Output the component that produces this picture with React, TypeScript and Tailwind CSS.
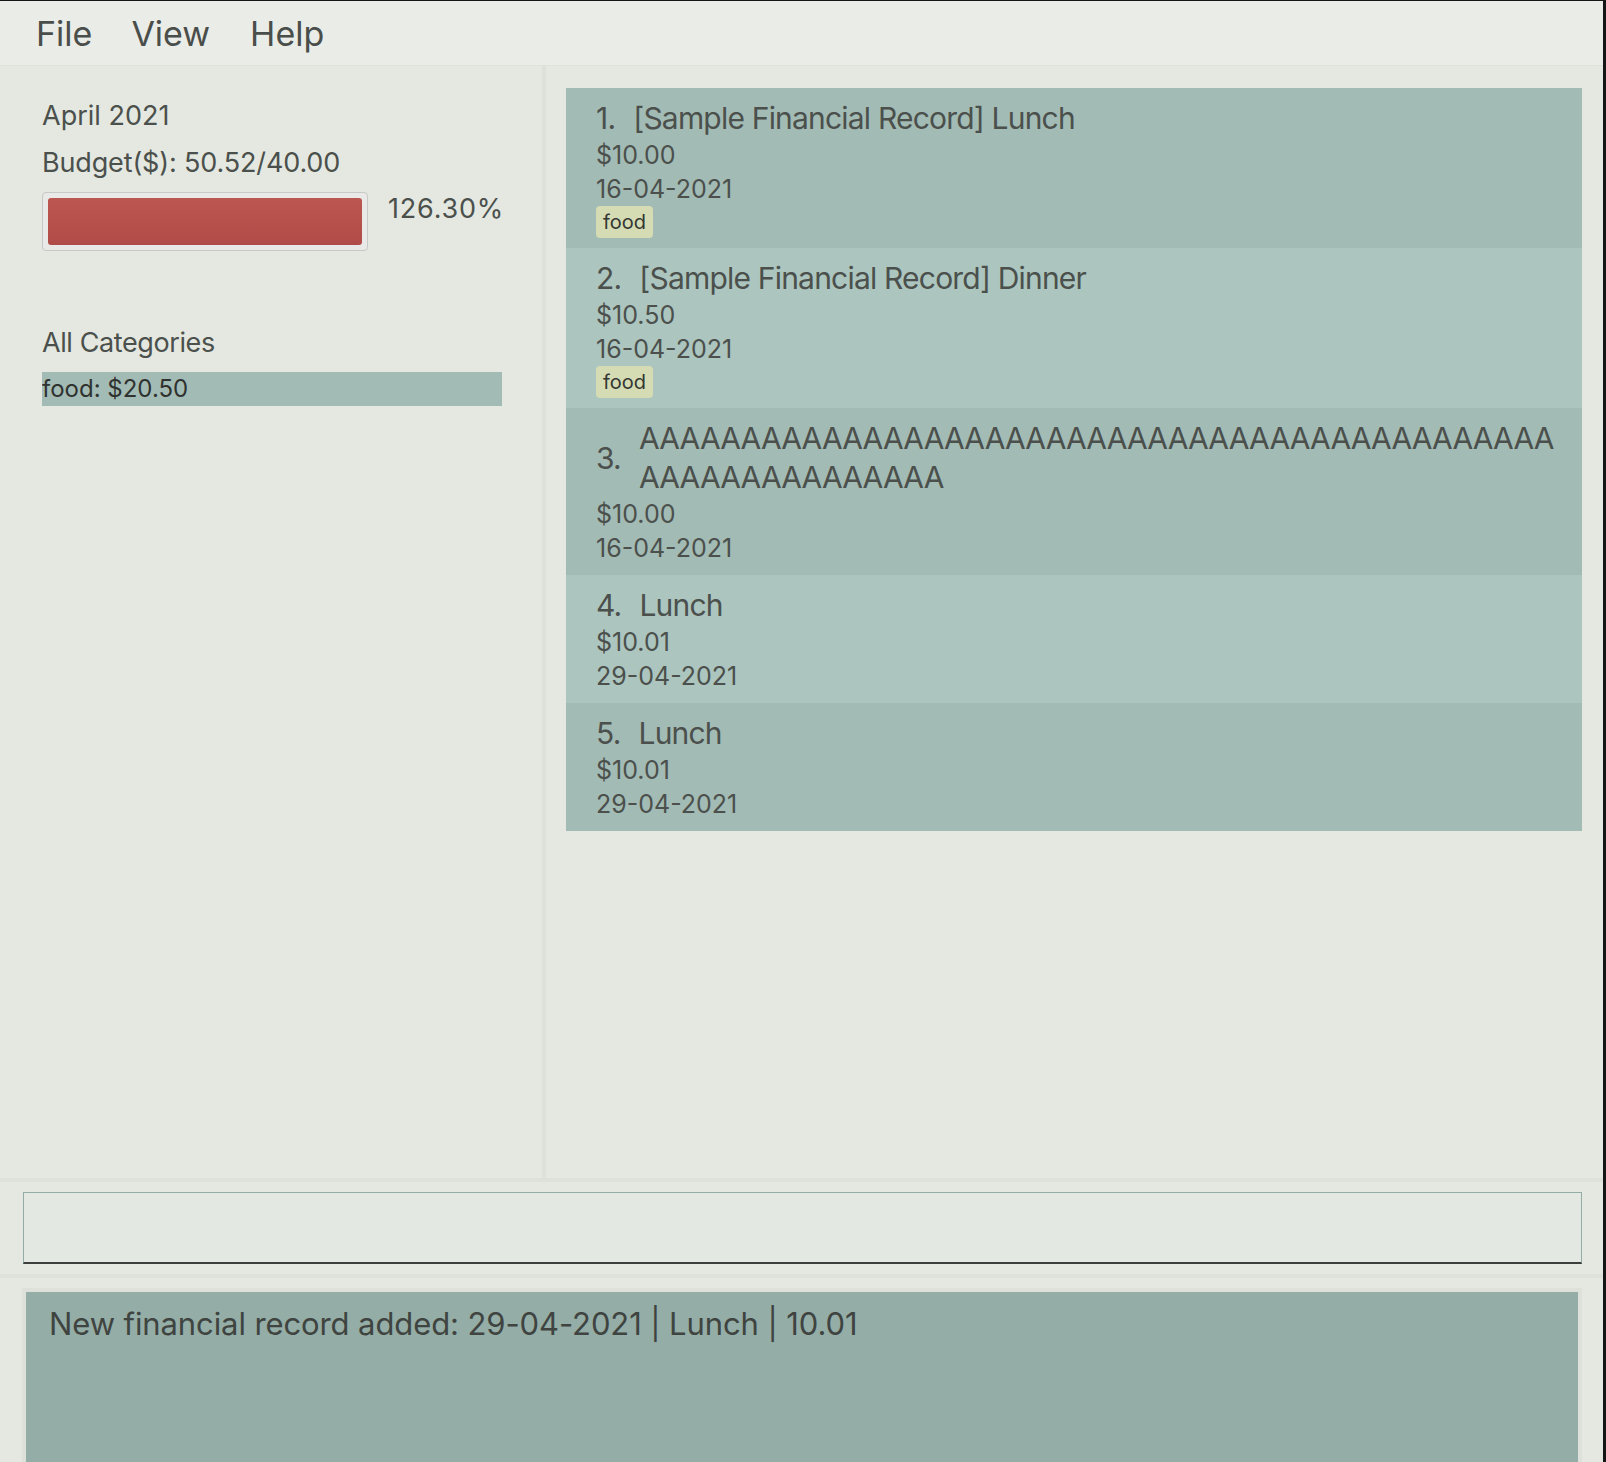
import React from 'react';

type Expense = {
  id: number;
  title: string[];
  amount: string;
  date: string;
  tags: string[];
};

const expenses: Expense[] = [
  { id: 1, title: ['[Sample Financial Record] Lunch'], amount: '$10.00', date: '16-04-2021', tags: ['food'] },
  { id: 2, title: ['[Sample Financial Record] Dinner'], amount: '$10.50', date: '16-04-2021', tags: ['food'] },
  { id: 3, title: ['A'.repeat(45), 'A'.repeat(15)], amount: '$10.00', date: '16-04-2021', tags: [] },
  { id: 4, title: ['Lunch'], amount: '$10.01', date: '29-04-2021', tags: [] },
  { id: 5, title: ['Lunch'], amount: '$10.01', date: '29-04-2021', tags: [] },
];

function ExpenseCard({ item }: { item: Expense }) {
  const odd = item.id % 2 === 1;
  return (
    <div className={`${odd ? 'bg-[#a3bbb5]' : 'bg-[#acc5bf]'} pl-[30px] pt-[11px] pb-[10px]`}>
      <div className="flex items-center gap-[18px] text-[30px] leading-[39px] tracking-[-0.8px]">
        <span>{item.id}.</span>
        <div className="min-w-0">
          {item.title.map((line, i) => (
            <div key={i} className="whitespace-nowrap">{line}</div>
          ))}
        </div>
      </div>
      <div className="text-[25px] leading-[34px]">{item.amount}</div>
      <div className="text-[25px] leading-[34px]">{item.date}</div>
      {item.tags.length > 0 && (
        <div className="flex gap-2">
          {item.tags.map(tag => (
            <span key={tag} className="rounded-[4px] bg-[#d5dcb4] px-[7px] text-[20px] leading-[32px] text-[#333633]">
              {tag}
            </span>
          ))}
        </div>
      )}
    </div>
  );
}

export default function App() {
  return (
    <div
      className="h-[1462px] w-[1606px] overflow-hidden bg-[#161616] pt-[1px] pr-[3px] text-[#4b504c]"
      style={{ fontFamily: 'Inter, "Noto Sans", sans-serif' }}
    >
      <div className="flex h-full flex-col bg-[#e4e8e1]">
        {/* menu bar */}
        <div className="flex h-[65px] shrink-0 items-center border-b border-[#dde1da] bg-[#eaece7] pl-[36px] text-[34px] text-[#4a4e4b]">
          <span className="mr-[39px]">File</span>
          <span className="mr-[40px]">View</span>
          <span>Help</span>
        </div>

        {/* main panels */}
        <div className="flex h-[1112px] shrink-0">
          <div className="w-[542px] shrink-0 pl-[42px] pt-[34px]">
            <div className="w-[460px] overflow-hidden">
              <div className="text-[27px] leading-[32px]">April 2021</div>
              <div className="mt-[15px] text-[27px] leading-[32px] tracking-[-0.15px]">Budget($): 50.52/40.00</div>
              <div className="mt-[13px] flex items-start gap-[20px]">
                <div className="h-[59px] w-[326px] shrink-0 rounded-[4px] border border-[#c6c9c5] bg-[#e9e9e8] p-[5px]">
                  <div className="h-full rounded-[3px] bg-gradient-to-b from-[#bc5651] to-[#b04c47]" />
                </div>
                <span className="whitespace-nowrap pt-[1px] text-[27px] leading-[32px] tracking-[0.8px]">126.30%</span>
              </div>
              <div className="mt-[76px] text-[27px] leading-[32px] tracking-[-0.4px]">All Categories</div>
              <div className="mt-[13px] h-[34px] bg-[#a3bbb5] text-[24px] leading-[34px] text-[#2f322f]">food: $20.50</div>
            </div>
          </div>
          <div className="w-[4px] shrink-0 bg-[#dde1da]" />
          <div className="min-w-0 flex-1 overflow-hidden pl-[20px] pr-[21px] pt-[22px]">
            {expenses.map(e => (
              <ExpenseCard key={e.id} item={e} />
            ))}
          </div>
        </div>

        <div className="h-[4px] shrink-0 bg-[#dde1da]" />

        {/* command box */}
        <div className="h-[92px] shrink-0 pl-[23px] pr-[21px] pt-[10px]">
          <div className="h-[72px] border border-b-2 border-[#93aca6] border-b-[#3c3f3b] bg-[#e4e8e2]" />
        </div>

        <div className="h-[4px] shrink-0 bg-[#dde1da]" />

        {/* result display */}
        <div className="flex-1 pl-[22px] pr-[21px] pt-[10px]">
          <div className="h-full border-4 border-b-0 border-[#dde1da] bg-[#94ada7] pl-[23px] pt-[12px] text-[31px] leading-[40px] tracking-[-0.1px] text-[#3f4440]">
            New financial record added: 29-04-2021 | Lunch | 10.01
          </div>
        </div>
      </div>
    </div>
  );
}
